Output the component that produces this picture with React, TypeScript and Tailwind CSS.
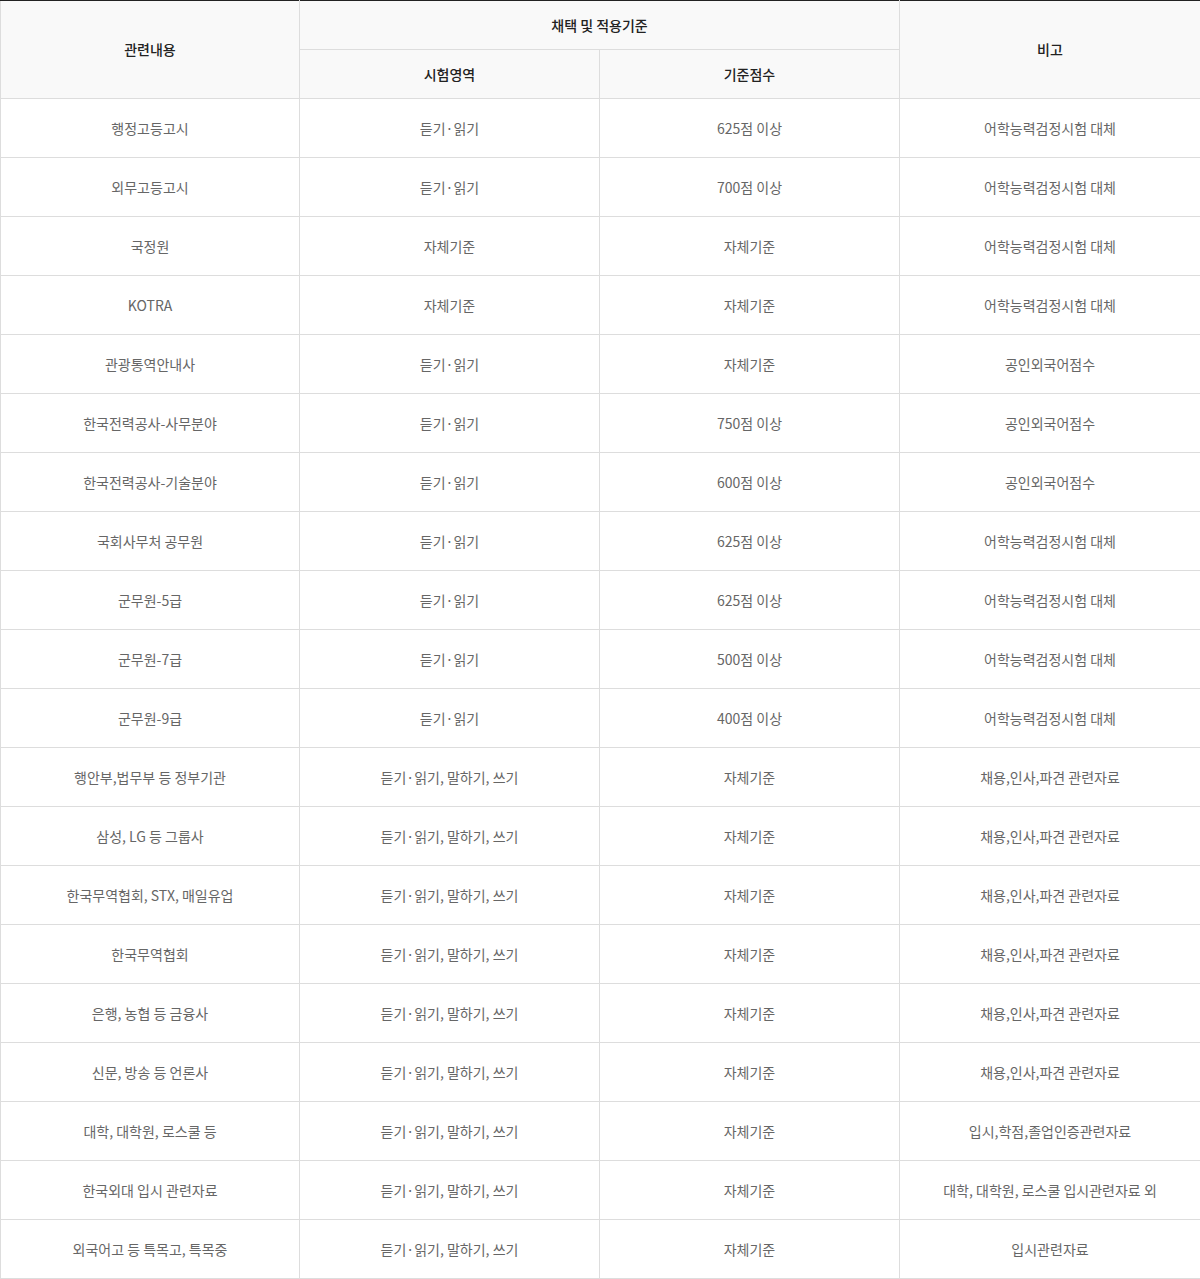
const rows: [string, string, string, string][] = [
  ["행정고등고시", "듣기·읽기", "625점 이상", "어학능력검정시험 대체"],
  ["외무고등고시", "듣기·읽기", "700점 이상", "어학능력검정시험 대체"],
  ["국정원", "자체기준", "자체기준", "어학능력검정시험 대체"],
  ["KOTRA", "자체기준", "자체기준", "어학능력검정시험 대체"],
  ["관광통역안내사", "듣기·읽기", "자체기준", "공인외국어점수"],
  ["한국전력공사-사무분야", "듣기·읽기", "750점 이상", "공인외국어점수"],
  ["한국전력공사-기술분야", "듣기·읽기", "600점 이상", "공인외국어점수"],
  ["국회사무처 공무원", "듣기·읽기", "625점 이상", "어학능력검정시험 대체"],
  ["군무원-5급", "듣기·읽기", "625점 이상", "어학능력검정시험 대체"],
  ["군무원-7급", "듣기·읽기", "500점 이상", "어학능력검정시험 대체"],
  ["군무원-9급", "듣기·읽기", "400점 이상", "어학능력검정시험 대체"],
  ["행안부,법무부 등 정부기관", "듣기·읽기, 말하기, 쓰기", "자체기준", "채용,인사,파견 관련자료"],
  ["삼성, LG 등 그룹사", "듣기·읽기, 말하기, 쓰기", "자체기준", "채용,인사,파견 관련자료"],
  ["한국무역협회, STX, 매일유업", "듣기·읽기, 말하기, 쓰기", "자체기준", "채용,인사,파견 관련자료"],
  ["한국무역협회", "듣기·읽기, 말하기, 쓰기", "자체기준", "채용,인사,파견 관련자료"],
  ["은행, 농협 등 금융사", "듣기·읽기, 말하기, 쓰기", "자체기준", "채용,인사,파견 관련자료"],
  ["신문, 방송 등 언론사", "듣기·읽기, 말하기, 쓰기", "자체기준", "채용,인사,파견 관련자료"],
  ["대학, 대학원, 로스쿨 등", "듣기·읽기, 말하기, 쓰기", "자체기준", "입시,학점,졸업인증관련자료"],
  ["한국외대 입시 관련자료", "듣기·읽기, 말하기, 쓰기", "자체기준", "대학, 대학원, 로스쿨 입시관련자료 외"],
  ["외국어고 등 특목고, 특목중", "듣기·읽기, 말하기, 쓰기", "자체기준", "입시관련자료"],
];

export default function App() {
  const th = "border border-[#dddddd] bg-[#f9f9f9] text-[14px] font-medium text-[#222] text-center align-middle p-0";
  const td = "border border-[#dddddd] text-[14px] text-[#666] text-center align-middle p-0";

  return (
    <div className="w-[1200px] bg-white font-['Noto_Sans_CJK_KR','Noto_Sans',sans-serif]">
      <table className="w-[1200px] table-fixed border-collapse border-t border-t-[#222]">
        <colgroup>
          <col className="w-[299px]" />
          <col className="w-[300px]" />
          <col className="w-[300px]" />
          <col className="w-[301px]" />
        </colgroup>
        <thead>
          <tr className="h-[49px]">
            <th rowSpan={2} className={`${th} border-t-[#222]`}>관련내용</th>
            <th colSpan={2} className={`${th} border-t-[#222]`}>채택 및 적용기준</th>
            <th rowSpan={2} className={`${th} border-t-[#222]`}>비고</th>
          </tr>
          <tr className="h-[49px]">
            <th className={th}>시험영역</th>
            <th className={th}>기준점수</th>
          </tr>
        </thead>
        <tbody>
          {rows.map((r, i) => (
            <tr key={i} className="h-[59px]">
              {r.map((c, j) => (
                <td key={j} className={td}>{c}</td>
              ))}
            </tr>
          ))}
        </tbody>
      </table>
    </div>
  );
}
